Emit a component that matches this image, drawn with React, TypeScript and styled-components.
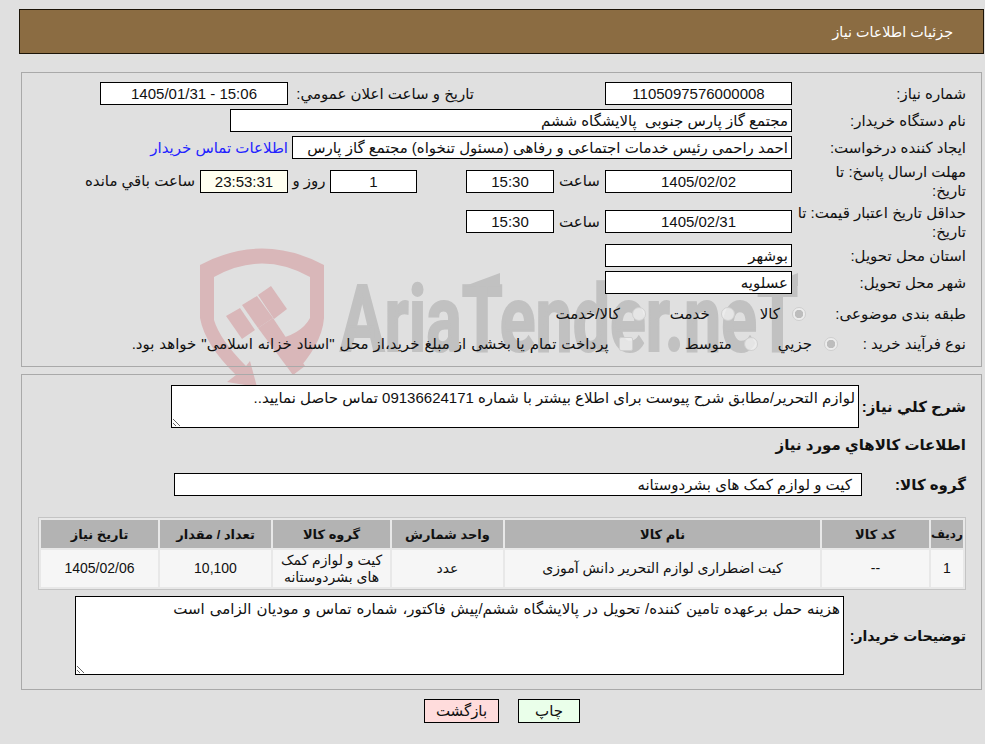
import React from 'react'
import styled, { createGlobalStyle } from 'styled-components'

const GlobalStyle = createGlobalStyle`
  html, body {
    margin: 0;
    padding: 0;
    background: #e0e0e0;
  }
  body {
    font-family: 'Liberation Sans', 'DejaVu Sans', sans-serif;
    font-size: 15px;
    color: #111;
  }
`

const Page = styled.div`
  position: relative;
  width: 985px;
  height: 744px;
  overflow: hidden;
  direction: rtl;
`

const Watermark = styled.svg`
  position: absolute;
  left: 0;
  top: 0;
  z-index: 0;
`

const Content = styled.div`
  position: relative;
  z-index: 1;
  display: flex;
  flex-direction: column;
`

const Header = styled.div`
  box-sizing: border-box;
  height: 45px;
  margin: 9px 1px 0 19px;
  padding-right: 30px;
  display: flex;
  align-items: center;
  background: #8b6c42;
  border: 1px solid #1c1408;
  color: #fff;
  font-size: 14.3px;
`

const Section = styled.section<{ $mt: number; $h: number; $pt: number }>`
  box-sizing: border-box;
  width: 961px;
  height: ${p => p.$h}px;
  margin: ${p => p.$mt}px 3px 0 0;
  padding: ${p => p.$pt}px 15px 0 0;
  border: 1px solid #a9a9a9;
  display: flex;
  flex-direction: column;
`

const Row = styled.div<{ $h: number }>`
  display: flex;
  align-items: center;
  height: ${p => p.$h}px;
`

const RowLabel = styled.div`
  width: 174px;
  flex: none;
  line-height: 19px;
`

const Field = styled.div<{ $w: number; $right?: boolean; $warm?: boolean }>`
  box-sizing: border-box;
  width: ${p => p.$w}px;
  height: 23px;
  flex: none;
  overflow: hidden;
  white-space: pre;
  line-height: 21px;
  padding: 0 ${p => (p.$right ? '3px' : '0')};
  text-align: ${p => (p.$right ? 'right' : 'center')};
  background: ${p => (p.$warm ? '#fffff0' : '#fff')};
  border: 1px solid #000;
`

const Caption = styled.span<{ $w?: number; $gap?: number; $start?: boolean }>`
  flex: none;
  width: ${p => (p.$w ? `${p.$w}px` : 'auto')};
  margin-right: ${p => p.$gap ?? 0}px;
  text-align: ${p => (p.$start ? 'right' : 'center')};
  white-space: nowrap;
`

const Spacer = styled.div<{ $w: number }>`
  flex: none;
  width: ${p => p.$w}px;
`

const ContactLink = styled.a`
  margin-right: 4px;
  color: #2323ff;
  white-space: nowrap;
  text-decoration: none;
`

const Choice = styled.input<{ $gap: number }>`
  appearance: none;
  box-sizing: border-box;
  flex: none;
  width: 14px;
  height: 14px;
  margin: 0 ${p => p.$gap}px 0 0;
  border: 1px solid #cfcfcf;
  border-radius: 50%;
  background: rgba(240, 240, 240, 0.75);
  &:checked {
    background: radial-gradient(circle, #bdbdbd 0 4px, rgba(240, 240, 240, 0.8) 4.5px);
  }
  &[type='checkbox'] {
    border-radius: 2px;
  }
`

const ChoiceText = styled.span<{ $gap: number; $words?: number }>`
  flex: none;
  margin-right: ${p => p.$gap}px;
  white-space: nowrap;
  word-spacing: ${p => p.$words ?? 0}px;
`

const StrongLabel = styled.label<{ $w: number; $size?: number }>`
  flex: none;
  width: ${p => p.$w}px;
  font-weight: 700;
  font-size: ${p => p.$size ?? 15}px;
  white-space: nowrap;
`

const TextBox = styled.textarea<{ $w: number; $h: number; $words?: number }>`
  box-sizing: border-box;
  flex: none;
  width: ${p => p.$w}px;
  height: ${p => p.$h}px;
  margin: 0;
  padding: 3px 3px 2px;
  border: 1px solid #000;
  border-radius: 0;
  outline: none;
  background: #fff;
  color: #111;
  font-family: inherit;
  font-size: 15px;
  line-height: 18px;
  word-spacing: ${p => p.$words ?? 0}px;
`

const Heading = styled.h3`
  margin: 0;
  height: 45px;
  padding-bottom: 19px;
  box-sizing: border-box;
  display: flex;
  align-items: flex-end;
  font-size: 15px;
  font-weight: 700;
`

const GroupField = styled(Field)`
  padding-right: 9px;
`

const ItemsTable = styled.table`
  box-sizing: border-box;
  width: 928px;
  margin-top: 21px;
  table-layout: fixed;
  border-collapse: separate;
  border-spacing: 2px;
  background: #e8e8e8;
  border: 1px solid #c4c4c4;
  font-size: 14px;
`

const HeadCell = styled.th<{ $w: number; $tight?: boolean }>`
  box-sizing: border-box;
  width: ${p => p.$w}px;
  height: 28px;
  padding: 0;
  background: #b3b3b3;
  font-size: ${p => (p.$tight ? 12 : 13)}px;
  font-weight: 700;
  text-align: center;
  white-space: nowrap;
`

const BodyCell = styled.td`
  box-sizing: border-box;
  height: 37px;
  padding: 0 4px;
  background: #f6f6f6;
  text-align: center;
  line-height: 17px;
`

const NotesRow = styled.div`
  display: flex;
  align-items: center;
  margin-top: 6px;
`

const ButtonBar = styled.div`
  display: flex;
  gap: 19px;
  margin: 9px 405px 0 0;
`

const ActionButton = styled.button<{ $w: number; $bg: string }>`
  box-sizing: border-box;
  width: ${p => p.$w}px;
  height: 24px;
  padding: 0;
  border: 1px solid #000;
  background: ${p => p.$bg};
  color: #111;
  font-family: inherit;
  font-size: 15px;
`

const columns = [
  { title: 'ردیف', w: 32, value: '1' },
  { title: 'کد کالا', w: 107, value: '--' },
  { title: 'نام کالا', w: 315, value: 'کیت اضطراری لوازم التحریر دانش آموزی' },
  { title: 'واحد شمارش', w: 111, value: 'عدد' },
  { title: 'گروه کالا', w: 117, value: 'کیت و لوازم کمک های بشردوستانه' },
  { title: 'تعداد / مقدار', w: 111, value: '10,100' },
  { title: 'تاریخ نیاز', w: 117, value: '1405/02/06' }
]

const Logo = () => (
  <Watermark width="985" height="744" viewBox="0 0 985 744" aria-hidden="true">
    <g fill="#d9b7b9">
      <path d="M200 265 Q262 232 324 265 L324 318 Q322 345 293 375 L273 340 Q301 335 310 318 L310 277 Q262 250 214 277 L214 320 Q220 340 246 366 L250 361 L257 387 L227 382 L236 375 Q205 345 200 318 Z" />
      <path d="M226 316 L240 308 L255 330 L242 339 Z" />
      <path d="M242 305 L257 296 L273 318 L258 328 Z" />
      <path d="M258 295 L271 286 L287 309 L274 319 Z" />
      <path d="M258 328 L273 318 L305 366 L293 375 Z" />
    </g>
    <text
      x="340"
      y="351"
      fill="#c1c1c1"
      stroke="#c1c1c1"
      strokeWidth="2"
      fontFamily="Roboto, sans-serif"
      fontWeight="700"
      fontSize="92"
      textLength="458"
      lengthAdjust="spacingAndGlyphs"
      direction="ltr"
    >
      AriaTender.neT
    </text>
    <g fill="#c1c1c1">
      <path d="M465 286 L500 273 L500 286 Z" />
      <path d="M765 286 L798 273 L798 286 Z" />
    </g>
  </Watermark>
)

export default function App() {
  return (
    <Page>
      <GlobalStyle />
      <Logo />
      <Content>
        <Header>جزئیات اطلاعات نیاز</Header>

        <Section $mt={18} $h={295} $pt={7}>
          <Row $h={27}>
            <RowLabel>شماره نیاز:</RowLabel>
            <Field $w={187}>1105097576000008</Field>
            <Caption $gap={131} $w={181} $start>
              تاریخ و ساعت اعلان عمومي:
            </Caption>
            <Field $w={188} style={{ marginRight: 5 }}>
              15:06 - 1405/01/31
            </Field>
          </Row>
          <Row $h={27}>
            <RowLabel>نام دستگاه خریدار:</RowLabel>
            <Field $w={562} $right>
              مجتمع گاز پارس جنوبی  پالایشگاه ششم
            </Field>
          </Row>
          <Row $h={27}>
            <RowLabel>ایجاد کننده درخواست:</RowLabel>
            <Field $w={500} $right>
              احمد راحمی رئیس خدمات اجتماعی و رفاهی (مسئول تنخواه) مجتمع گاز پارس
            </Field>
            <ContactLink href="#">اطلاعات تماس خریدار</ContactLink>
          </Row>
          <Row $h={40}>
            <RowLabel>
              مهلت ارسال پاسخ: تا
              <br />
              تاریخ:
            </RowLabel>
            <Field $w={187}>1405/02/02</Field>
            <Caption $w={51}>ساعت</Caption>
            <Field $w={88}>15:30</Field>
            <Spacer $w={49} />
            <Field $w={87}>1</Field>
            <Caption $w={42}>روز و</Caption>
            <Field $w={88} $warm>
              23:53:31
            </Field>
            <Caption $gap={5}>ساعت باقي مانده</Caption>
          </Row>
          <Row $h={41}>
            <RowLabel>
              حداقل تاریخ اعتبار قیمت: تا
              <br />
              تاریخ:
            </RowLabel>
            <Field $w={187}>1405/02/31</Field>
            <Caption $w={51}>ساعت</Caption>
            <Field $w={88}>15:30</Field>
          </Row>
          <Row $h={27}>
            <RowLabel>استان محل تحویل:</RowLabel>
            <Field $w={187} $right>
              بوشهر
            </Field>
          </Row>
          <Row $h={27}>
            <RowLabel>شهر محل تحویل:</RowLabel>
            <Field $w={187} $right>
              عسلویه
            </Field>
          </Row>
          <Row $h={35}>
            <RowLabel>طبقه بندی موضوعی:</RowLabel>
            <Choice type="radio" name="subject" defaultChecked disabled $gap={-14} />
            <ChoiceText $gap={12}>کالا</ChoiceText>
            <Choice type="radio" name="subject" disabled $gap={25} />
            <ChoiceText $gap={11}>خدمت</ChoiceText>
            <Choice type="radio" name="subject" disabled $gap={24} />
            <ChoiceText $gap={12}>کالا/خدمت</ChoiceText>
          </Row>
          <Row $h={25}>
            <RowLabel>نوع فرآیند خرید :</RowLabel>
            <Choice type="radio" name="process" defaultChecked disabled $gap={-46} />
            <ChoiceText $gap={12}>جزيي</ChoiceText>
            <Choice type="radio" name="process" disabled $gap={20} />
            <ChoiceText $gap={12}>متوسط</ChoiceText>
            <Choice type="checkbox" disabled $gap={52} />
            <ChoiceText $gap={10} $words={0.8}>
              پرداخت تمام یا بخشی از مبلغ خرید،از محل "اسناد خزانه اسلامی" خواهد بود.
            </ChoiceText>
          </Row>
        </Section>

        <Section $mt={7} $h={316} $pt={10}>
          <Row $h={43}>
            <StrongLabel $w={107}>شرح کلي نیاز:</StrongLabel>
            <TextBox
              $w={688}
              $h={43}
              readOnly
              defaultValue="لوازم التحریر/مطابق شرح پیوست برای اطلاع بیشتر با شماره 09136624171 تماس حاصل نمایید.."
            />
          </Row>
          <Heading>اطلاعات کالاهاي مورد نیاز</Heading>
          <Row $h={23}>
            <StrongLabel $w={104}>گروه کالا:</StrongLabel>
            <GroupField $w={688} $right>
              کیت و لوازم کمک های بشردوستانه
            </GroupField>
          </Row>
          <ItemsTable>
            <thead>
              <tr>
                {columns.map(c => (
                  <HeadCell key={c.title} $w={c.w} $tight={c.w < 40}>
                    {c.title}
                  </HeadCell>
                ))}
              </tr>
            </thead>
            <tbody>
              <tr>
                {columns.map(c => (
                  <BodyCell key={c.title}>{c.value}</BodyCell>
                ))}
              </tr>
            </tbody>
          </ItemsTable>
          <NotesRow>
            <StrongLabel $w={122} $size={14}>
              توضیحات خریدار:
            </StrongLabel>
            <TextBox
              $w={769}
              $h={79}
              $words={0.8}
              readOnly
              defaultValue="هزینه حمل برعهده تامین کننده/ تحویل در پالایشگاه ششم/پیش فاکتور، شماره تماس و مودیان الزامی است"
            />
          </NotesRow>
        </Section>

        <ButtonBar>
          <ActionButton $w={62} $bg="#eaffea">
            چاپ
          </ActionButton>
          <ActionButton $w={75} $bg="#ffdcdc">
            بازگشت
          </ActionButton>
        </ButtonBar>
      </Content>
    </Page>
  )
}
